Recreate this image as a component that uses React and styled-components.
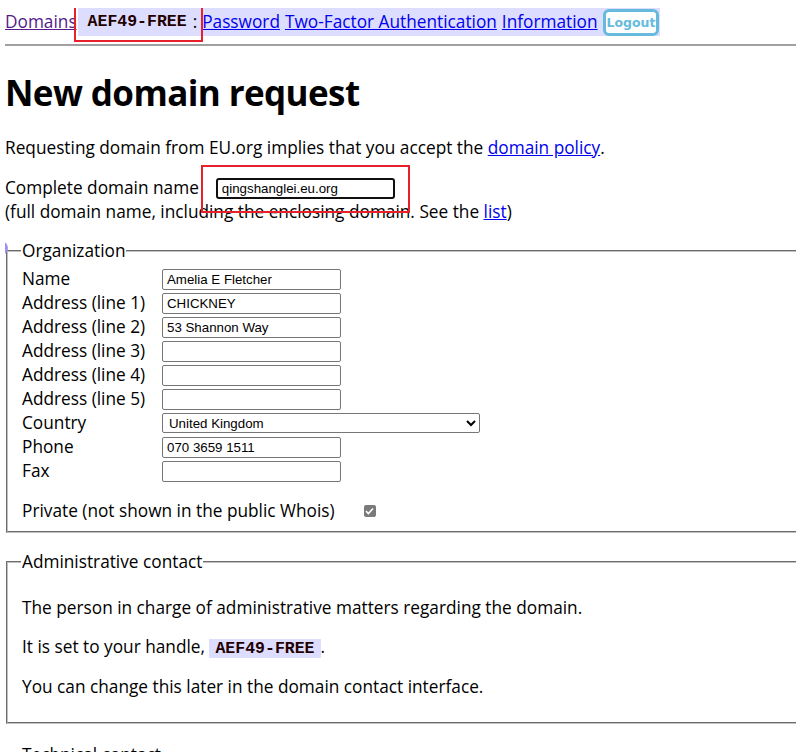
import React from "react";
import styled, { createGlobalStyle } from "styled-components";

const GlobalStyle = createGlobalStyle`
  html {
    overflow-x: hidden;
  }
  body {
    margin: 8px 0 0 5px;
    font-family: "Open Sans", "Noto Sans", sans-serif;
    font-size: 17.25px;
    line-height: 24px;
    color: #000;
    background: #fff;
  }
  a {
    color: #0000ee;
  }
`;

const Page = styled.div`
  position: relative;
`;

const Nav = styled.div`
  display: flex;
  align-items: center;
  height: 28px;
`;

const VisitedLink = styled.a`
  color: #551a8b;
`;

const NavBox = styled.span`
  display: inline-flex;
  align-items: center;
  gap: 5px;
  height: 28px;
  padding: 0 1px 0 10px;
  margin-left: 1px;
  background: #ddddff;
`;

const Handle = styled.code`
  font-family: "Liberation Mono", "DejaVu Sans Mono", monospace;
  font-weight: bold;
  font-size: 16.5px;
  color: #220000;
  background: ${(p) => (p.$inline ? "#ddddff" : "transparent")};
  padding: ${(p) => (p.$inline ? "0 6px" : "0")};
`;

const Colon = styled.span`
  margin: 0 0 0 1px;
`;

const LogoutButton = styled.button`
  height: 27px;
  padding: 0 1px;
  border: 3px solid #66bbdd;
  border-radius: 6px;
  background: #fff;
  color: #66bbdd;
  font-family: "DejaVu Sans", Verdana, sans-serif;
  font-weight: bold;
  font-size: 12.5px;
  cursor: pointer;
`;

const Rule = styled.hr`
  margin: 8px 0 0 -1px;
  border: 0;
  border-top: 2px solid #a0a0a0;
`;

const Title = styled.h1`
  margin: 25px 0 21px;
  font-size: 35px;
  line-height: 44px;
  letter-spacing: -0.6px;
  font-weight: bold;
`;

const Text = styled.p`
  margin: 0;
`;

const DomainRow = styled.div`
  display: flex;
  align-items: center;
  gap: 17px;
  margin-top: 16px;
  height: 24px;
`;

const TextInput = styled.input`
  box-sizing: border-box;
  width: ${(p) => p.$w || 179}px;
  height: 21px;
  padding: 1px 4px;
  border: ${(p) => (p.$focus ? "2px solid #101010" : "1px solid #767676")};
  border-radius: ${(p) => (p.$focus ? 3 : 2)}px;
  font-family: "Liberation Sans", Arial, sans-serif;
  font-size: 13.3px;
  color: #000;
  background: #fff;
  outline: none;
`;

const Fieldset = styled.fieldset`
  margin: ${(p) => p.$top}px 0 0 1px;
  padding: 4px 12px ${(p) => p.$bottom}px 14px;
  width: 880px;
  border: 2px groove #c0c0c0;
`;

const Legend = styled.legend`
  padding: 0 1px;
  margin-left: -1px;
  line-height: 24px;
`;

const FormGrid = styled.div`
  display: grid;
  grid-template-columns: 140px auto;
  grid-auto-rows: 24px;
  align-items: center;
  justify-items: start;
`;

const Select = styled.select`
  box-sizing: border-box;
  width: 318px;
  height: 20px;
  padding: 0 2px;
  border: 1px solid #767676;
  border-radius: 2px;
  font-family: "Liberation Sans", Arial, sans-serif;
  font-size: 13.3px;
  background: #fff;
  color: #000;
`;

const PrivateRow = styled.div`
  display: flex;
  align-items: center;
  gap: 29px;
  margin-top: 16px;
  height: 24px;
`;

const Check = styled.span`
  display: inline-flex;
  align-items: center;
  justify-content: center;
  width: 12px;
  height: 12px;
  border-radius: 2px;
  background: #7a7a7a;
`;

const ContactBody = styled.div`
  display: flex;
  flex-direction: column;
  gap: 14.5px;
  padding-top: 18px;
`;

const Annotation = styled.div`
  position: absolute;
  box-sizing: border-box;
  border: 2px solid #e8202a;
  pointer-events: none;
`;

const Blob = styled.svg`
  position: absolute;
  left: -5px;
  top: 232px;
  z-index: 2;
`;

const fields = [
  ["Name", "Amelia E Fletcher"],
  ["Address (line 1)", "CHICKNEY"],
  ["Address (line 2)", "53 Shannon Way"],
  ["Address (line 3)", ""],
  ["Address (line 4)", ""],
  ["Address (line 5)", ""],
];

export default function App() {
  return (
    <Page>
      <GlobalStyle />
      <Nav>
        <VisitedLink href="#">Domains</VisitedLink>
        <NavBox>
          <Handle>AEF49-FREE</Handle>
          <Colon>:</Colon>
          <a href="#">Password</a>
          <a href="#">Two-Factor Authentication</a>
          <a href="#">Information</a>
          <LogoutButton>Logout</LogoutButton>
        </NavBox>
      </Nav>
      <Rule />
      <Title>New domain request</Title>
      <Text>
        Requesting domain from EU.org implies that you accept the{" "}
        <a href="#">domain policy</a>.
      </Text>
      <DomainRow>
        <span>Complete domain name</span>
        <TextInput $focus defaultValue="qingshanglei.eu.org" />
      </DomainRow>
      <Text>
        (full domain name, including the enclosing domain. See the{" "}
        <a href="#">list</a>)
      </Text>

      <Fieldset $top={15} $bottom={8}>
        <Legend>Organization</Legend>
        <FormGrid>
          {fields.map(([label, value]) => (
            <React.Fragment key={label}>
              <span>{label}</span>
              <TextInput defaultValue={value} />
            </React.Fragment>
          ))}
          <span>Country</span>
          <Select defaultValue="GB">
            <option value="GB">United Kingdom</option>
          </Select>
          <span>Phone</span>
          <TextInput defaultValue="070 3659 1511" />
          <span>Fax</span>
          <TextInput defaultValue="" />
        </FormGrid>
        <PrivateRow>
          <span>Private (not shown in the public Whois)</span>
          <Check>
            <svg width="9" height="8" viewBox="0 0 9 8">
              <path d="M1 4.2 L3.4 6.5 L8 1.5" fill="none" stroke="#fff" strokeWidth="1.6" />
            </svg>
          </Check>
        </PrivateRow>
      </Fieldset>

      <Fieldset $top={17} $bottom={23}>
        <Legend>Administrative contact</Legend>
        <ContactBody>
          <Text>The person in charge of administrative matters regarding the domain.</Text>
          <Text>
            It is set to your handle, <Handle $inline>AEF49-FREE</Handle>.
          </Text>
          <Text>You can change this later in the domain contact interface.</Text>
        </ContactBody>
      </Fieldset>

      <Fieldset $top={19} $bottom={8}>
        <Legend>Technical contact</Legend>
      </Fieldset>

      <Annotation style={{ left: 69, top: -2, width: 129, height: 36 }} />
      <Annotation style={{ left: 196, top: 157, width: 209, height: 48 }} />
      <Blob width="9" height="16" viewBox="0 0 9 16">
        <circle cx="1" cy="8" r="5.5" fill="none" stroke="#9d92f0" strokeWidth="3" />
      </Blob>
    </Page>
  );
}
